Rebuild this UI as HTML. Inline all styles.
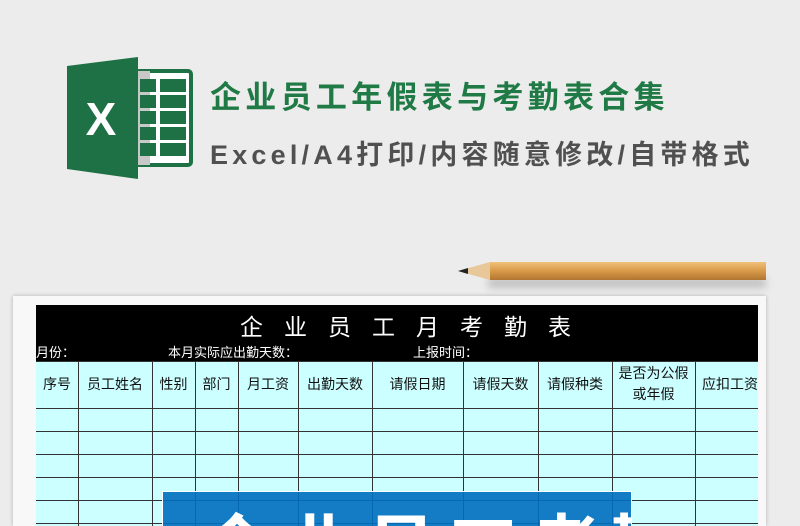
<!DOCTYPE html>
<html><head><meta charset="utf-8"><style>
*{margin:0;padding:0;box-sizing:border-box}
html,body{width:800px;height:526px;overflow:hidden}
body{background:#ececec;font-family:"Liberation Sans","Noto Sans CJK SC",sans-serif}
#w{position:relative;width:800px;height:526px;overflow:hidden}
.a{position:absolute}
.t1{left:210px;top:72px;font-size:31px;font-weight:bold;color:#1f7a45;letter-spacing:4.3px;white-space:nowrap}
.t2{left:210px;top:133px;font-size:27px;color:#505050;white-space:nowrap;letter-spacing:4.2px;font-weight:bold}
.card{left:13px;top:296px;width:753px;height:230px;background:#f8f8f8;box-shadow:0 0 4px rgba(0,0,0,.25)}
.blk{left:36px;top:305px;width:722px;height:56px;background:#000;color:#fff}
.grid{left:36px;top:361px;width:722px;height:165px;background:#ccffff;overflow:hidden}
.v{position:absolute;top:0;width:1px;height:165px;background:#333}
.h{position:absolute;left:0;width:722px;height:1px;background:#333}
.hd{position:absolute;top:0;height:46px;display:flex;align-items:center;justify-content:center;text-align:center;font-size:14px;color:#111;line-height:21px;white-space:nowrap;overflow:hidden}
</style></head><body><div id="w">
<svg class="a" style="left:66px;top:57px" width="128" height="122" viewBox="0 0 128 122">
<rect x="70" y="14" width="55" height="94" rx="3" fill="#fff" stroke="#1e7145" stroke-width="4"/>
<rect x="70" y="14" width="14" height="94" fill="#c8c8c8"/>
<g fill="#1e7145">
<rect x="74" y="22" width="16" height="13"/><rect x="94" y="22" width="26" height="13"/>
<rect x="74" y="38" width="16" height="13"/><rect x="94" y="38" width="26" height="13"/>
<rect x="74" y="54" width="16" height="13"/><rect x="94" y="54" width="26" height="13"/>
<rect x="74" y="70" width="16" height="13"/><rect x="94" y="70" width="26" height="13"/>
<rect x="74" y="86" width="16" height="13"/><rect x="94" y="86" width="26" height="13"/>
</g>
<polygon points="1,9 72,0 72,122 1,112" fill="#1e7145"/>
<text x="35" y="78" font-family="Liberation Sans" font-weight="bold" font-size="46" fill="#fff" text-anchor="middle">X</text>
</svg>
<div class="a t1">企业员工年假表与考勤表合集</div>
<div class="a t2">Excel/A4打印/内容随意修改/自带格式</div>
<div class="a" style="left:488px;top:278px;width:278px;height:10px;background:rgba(0,0,0,.18);filter:blur(4px)"></div>
<svg class="a" style="left:456px;top:260px" width="312" height="24">
<defs><linearGradient id="g" x1="0" y1="0" x2="0" y2="1"><stop offset="0" stop-color="#f0c07a"/><stop offset=".5" stop-color="#d99a48"/><stop offset="1" stop-color="#b07530"/></linearGradient></defs>
<polygon points="2,11 34,2 34,20" fill="#e8c898"/>
<polygon points="2,11 12,8 12,14" fill="#222"/>
<rect x="34" y="2" width="276" height="18" fill="url(#g)"/>
</svg>
<div class="a card"></div>
<div class="a blk">
<div class="a" style="left:204px;top:3px;font-size:23px;letter-spacing:21px;white-space:nowrap">企业员工月考勤表</div>
<div class="a" style="left:0;top:37px;font-size:13px">月份：</div>
<div class="a" style="left:132px;top:37px;font-size:13px">本月实际应出勤天数：</div>
<div class="a" style="left:377px;top:37px;font-size:13px">上报时间：</div>
</div>
<div class="a grid">
<div class="h" style="top:0"></div><div class="h" style="top:47px"></div><div class="h" style="top:70px"></div><div class="h" style="top:93px"></div><div class="h" style="top:116px"></div><div class="h" style="top:139px"></div><div class="h" style="top:162px"></div>
<div class="v" style="left:42px"></div><div class="v" style="left:116px"></div><div class="v" style="left:159px"></div><div class="v" style="left:202px"></div><div class="v" style="left:262px"></div><div class="v" style="left:336px"></div><div class="v" style="left:427px"></div><div class="v" style="left:502px"></div><div class="v" style="left:576px"></div><div class="v" style="left:659px"></div>
<div class="hd" style="left:0;width:42px">序号</div>
<div class="hd" style="left:42px;width:74px">员工姓名</div>
<div class="hd" style="left:116px;width:43px">性别</div>
<div class="hd" style="left:159px;width:43px">部门</div>
<div class="hd" style="left:202px;width:60px">月工资</div>
<div class="hd" style="left:262px;width:74px">出勤天数</div>
<div class="hd" style="left:336px;width:91px">请假日期</div>
<div class="hd" style="left:427px;width:75px">请假天数</div>
<div class="hd" style="left:502px;width:74px">请假种类</div>
<div class="hd" style="left:576px;width:83px;white-space:normal;padding:0 6px">是否为公假或年假</div>
<div class="hd" style="left:659px;width:63px;justify-content:flex-start;padding-left:7px">应扣工资</div>
</div>
<div class="a" style="left:162px;top:491px;width:470px;height:35px;background:rgba(0,110,190,.9);border:1px solid #fff;border-bottom:0;overflow:hidden">
<div class="a" style="left:38px;top:22px;font-size:72px;font-weight:bold;color:#fff;letter-spacing:10px;white-space:nowrap;line-height:1">企业员工考勤</div>
</div>
</div></body></html>
